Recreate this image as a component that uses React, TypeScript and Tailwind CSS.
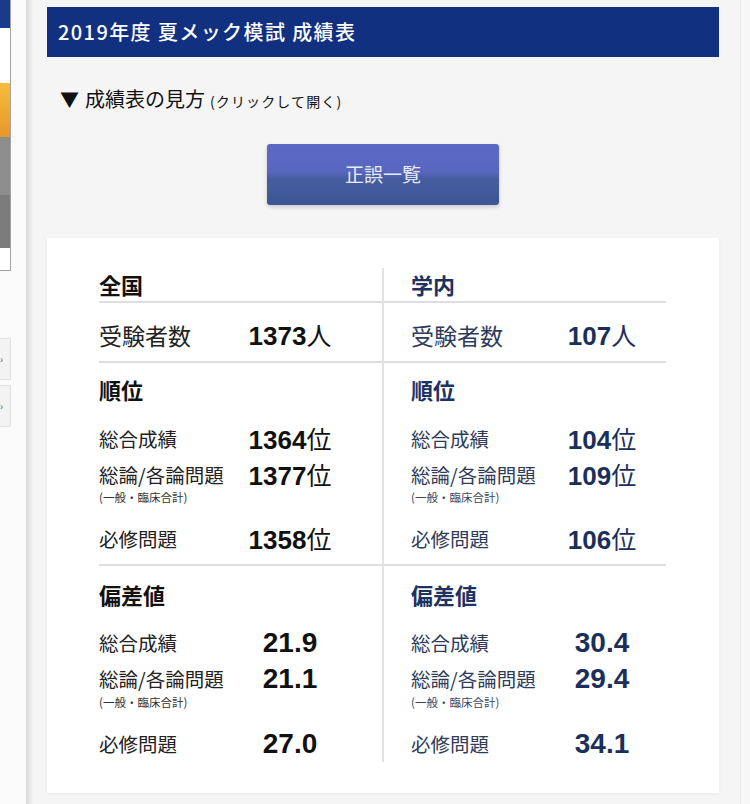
import React from "react";

type Side = {
  title: string;
  total: string;
  rank: [string, string, string];
  dev: [string, string, string];
};

const sides: Side[] = [
  { title: "全国", total: "1373", rank: ["1364", "1377", "1358"], dev: ["21.9", "21.1", "27.0"] },
  { title: "学内", total: "107", rank: ["104", "109", "106"], dev: ["30.4", "29.4", "34.1"] },
];

function Value({ num, unit, tone }: { num: string; unit?: string; tone: string }) {
  return (
    <div className={`w-[100px] text-center whitespace-nowrap leading-none ${tone}`}>
      {unit ? (
        <span className="font-['Liberation_Sans',sans-serif] font-bold text-[26px]">{num}</span>
      ) : (
        <span className="font-['Liberation_Sans',sans-serif] font-bold text-[28px]">{num}</span>
      )}
      {unit && <span className="text-[25px]">{unit}</span>}
    </div>
  );
}

function Column({ s, school }: { s: Side; school?: boolean }) {
  const pad = school ? "pl-[27px]" : "";
  const head = school ? "text-[#1b3263]" : "text-[#111]";
  const label = school ? "text-[#2e3c5a]" : "text-[#222]";
  const val = school ? "text-[#1b2f5c]" : "text-[#111]";
  const sub = school ? "text-[#3a4866]" : "text-[#333]";

  const Line = ({ text, num, unit, cls }: { text: string; num: string; unit?: string; cls: string }) => (
    <div className={`flex items-center ${pad} ${cls}`}>
      <div className={`w-[141px] text-[19.5px] leading-none ${label}`}>{text}</div>
      <Value num={num} unit={unit} tone={val} />
    </div>
  );
  const Sub = ({ cls }: { cls: string }) => (
    <div className={`flex items-center ${pad} ${cls} text-[11.5px] leading-none ${sub}`}>(一般・臨床合計)</div>
  );

  return (
    <div className={school ? "" : "border-r-2 border-[#e3e3e3]"}>
      <div className={`h-[35px] flex items-center border-b-2 border-[#dedede] text-[22px] font-bold ${pad} ${head}`}>
        {s.title}
      </div>
      <div className={`h-[60px] pt-[6px] flex items-center border-b-2 border-[#dedede] ${pad}`}>
        <div className={`w-[141px] text-[23px] leading-none ${label}`}>受験者数</div>
        <Value num={s.total} unit="人" tone={val} />
      </div>

      <div className={`h-[53px] flex items-center text-[22px] font-bold ${pad} ${head}`}>順位</div>
      <Line text="総合成績" num={s.rank[0]} unit="位" cls="h-[46px]" />
      <Line text="総論/各論問題" num={s.rank[1]} unit="位" cls="h-[26px]" />
      <Sub cls="h-[16px] pt-[3px]" />
      <Line text="必修問題" num={s.rank[2]} unit="位" cls="h-[62px] pt-[10px] border-b-2 border-[#dedede]" />

      <div className={`h-[56px] flex items-center text-[22px] font-bold ${pad} ${head}`}>偏差値</div>
      <Line text="総合成績" num={s.dev[0]} cls="h-[42px]" />
      <Line text="総論/各論問題" num={s.dev[1]} cls="h-[30px]" />
      <Sub cls="h-[14px] pt-[3px]" />
      <Line text="必修問題" num={s.dev[2]} cls="h-[54px] pt-[18px]" />
    </div>
  );
}

function SideBar() {
  return (
    <div className="w-[26px] shrink-0 bg-[#fbfbfb]">
      <div className="w-[11px] border-r border-b border-[#a3a3a3]">
        <div className="h-[28px] bg-[#1b3a8c]" />
        <div className="h-[55px] bg-white" />
        <div className="h-[54px] bg-[linear-gradient(to_bottom,#f6bd3d,#e8962b)]" />
        <div className="h-[58px] bg-[#8d8d8d]" />
        <div className="h-[53px] bg-[#7c7c7c]" />
        <div className="h-[22px] bg-white" />
      </div>
      <div className="mt-[67px] h-[42px] w-[11px] border border-l-0 border-[#e0e0e0] bg-[#f3f3f3] flex items-center text-[10px] text-[#555] leading-none">›</div>
      <div className="mt-[5px] h-[42px] w-[11px] border border-l-0 border-[#e0e0e0] bg-[#f3f3f3] flex items-center text-[10px] text-[#555] leading-none">›</div>
    </div>
  );
}

export default function App() {
  return (
    <div className="flex h-[804px] w-[750px] overflow-hidden bg-[#f5f5f6] font-['Noto_Sans_CJK_JP',sans-serif]">
      <SideBar />
      <div className="w-[7px] shrink-0 bg-[linear-gradient(to_right,#d9d9d9,#f3f3f4)]" />

      <div className="w-[707px] shrink-0 pl-[14px] pt-[7px]">
        <div className="w-[672px]">
          <div className="h-[50px] bg-[#11307f] px-[11px] flex items-center text-white text-[20px] font-medium tracking-[0.07em]">
            2019年度 夏メック模試 成績表
          </div>

          <div className="mt-[27px] h-[28px] pl-[13px] flex items-baseline text-[#111]">
            <span className="text-[19px] mr-[6px]">▼</span>
            <span className="text-[20px]">成績表の見方</span>
            <span className="text-[14px] ml-[5px] tracking-[0.08em]">(クリックして開く)</span>
          </div>

          <div className="mt-[32px] mx-auto w-[232px] h-[61px] rounded-[3px] bg-[linear-gradient(to_bottom,#5d6ac5_0%,#5966c0_45%,#455d9f_58%,#3c5795_100%)] shadow-[0_2px_4px_rgba(0,0,0,0.18)] flex items-center justify-center text-[19px] text-[#e8ecf8]">
            正誤一覧
          </div>

          <div className="mt-[33px] bg-white pl-[52px] pt-[30px] pb-[31px] shadow-[0_1px_3px_rgba(0,0,0,0.06)]">
            <div className="grid grid-cols-[285px_282px]">
              <Column s={sides[0]} />
              <Column s={sides[1]} school />
            </div>
          </div>
        </div>
      </div>

      <div className="w-[10px] shrink-0 border-l border-[#ebebeb] bg-[#f7f7f7]" />
    </div>
  );
}
